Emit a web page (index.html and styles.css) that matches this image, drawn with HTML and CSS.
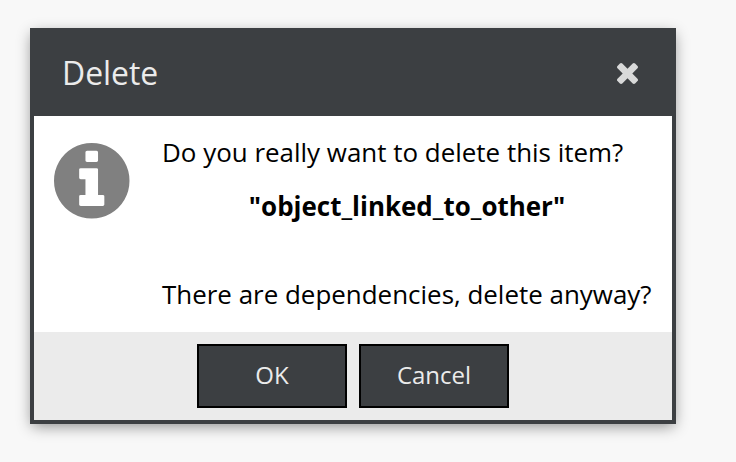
FILE: index.html
```html
<!DOCTYPE html>
<html lang="en">
<head>
<meta charset="utf-8">
<title>Delete</title>
<link rel="stylesheet" href="styles.css">
</head>
<body>
<div class="dialog" role="dialog" aria-labelledby="dialog-title">
  <header class="dialog-header">
    <h1 class="dialog-title" id="dialog-title">Delete</h1>
    <svg class="close-icon" viewBox="110 -18 1188 1188" aria-hidden="true"><path d="M1298 214q0-40-28-68l-136-136q-28-28-68-28t-68 28l-294 294-294-294q-28-28-68-28t-68 28l-136 136q-28 28-28 68t28 68l294 294-294 294q-28 28-28 68t28 68l136 136q28 28 68 28t68-28l294-294 294 294q28 28 68 28t68-28l136-136q28-28 28-68t-28-68l-294-294 294-294q28-28 28-68z"/></svg>
  </header>
  <main class="dialog-body">
    <svg class="info-icon" viewBox="128 128 1536 1536" aria-hidden="true"><path d="M1152 1376v-160q0-14-9-23t-23-9h-96v-512q0-14-9-23t-23-9h-320q-14 0-23 9t-9 23v160q0 14 9 23t23 9h96v320h-96q-14 0-23 9t-9 23v160q0 14 9 23t23 9h448q14 0 23-9t9-23zm-128-896v-160q0-14-9-23t-23-9h-192q-14 0-23 9t-9 23v160q0 14 9 23t23 9h192q14 0 23-9t9-23zm640 416q0 209-103 385.500t-279.500 279.500-385.500 103-385.500-103-279.500-279.500-103-385.500 103-385.500 279.500-279.500 385.500-103 385.500 103 279.500 279.500 103 385.500z"/></svg>
    <div class="message">
      <p class="question">Do you really want to delete this item?</p>
      <p class="item-name">"object_linked_to_other"</p>
      <p class="warning">There are dependencies, delete anyway?</p>
    </div>
  </main>
  <footer class="dialog-footer">
    <button class="button" type="button">OK</button>
    <button class="button" type="button">Cancel</button>
  </footer>
</div>
</body>
</html>
```
FILE: styles.css
```css
* {
  box-sizing: border-box;
}

body {
  margin: 0;
  padding: 28px 30px;
  background: #f8f8f8;
  font-family: "Open Sans", sans-serif;
  color: #000;
}

.dialog {
  width: 646px;
  height: 396px;
  display: flex;
  flex-direction: column;
  border: 4px solid #3c3f42;
  background: #fff;
  box-shadow: 0 4px 14px -2px rgba(0, 0, 0, 0.45);
}

.dialog-header {
  height: 84px;
  display: flex;
  align-items: center;
  justify-content: space-between;
  padding: 0 34px 2px 28px;
  background: #3c3f42;
}

.dialog-title {
  margin: 0;
  font-size: 31.9px;
  font-weight: 400;
  line-height: 44px;
  color: #ebebeb;
}

.close-icon {
  width: 21px;
  height: 21px;
  fill: #d8d9d9;
}

.dialog-body {
  height: 216px;
  display: flex;
  padding: 18px 20px 0;
}

.info-icon {
  width: 75.5px;
  height: 75.5px;
  margin-top: 9px;
  margin-right: 32.5px;
  flex: none;
  fill: #808080;
}

.message {
  width: 490px;
  flex: none;
  font-size: 25.95px;
  line-height: 36px;
  white-space: nowrap;
}

.message p {
  margin: 0;
}

.message .item-name {
  margin: 18px 0 52px;
  font-weight: 700;
  text-align: center;
}

.dialog-footer {
  height: 88px;
  display: flex;
  justify-content: center;
  gap: 12px;
  padding-top: 12px;
  background: #ebebeb;
}

.button {
  width: 150px;
  height: 64px;
  padding: 0 0 2px;
  border: 2px solid #000;
  background: #3c3f42;
  font: 24px/32px "Open Sans", sans-serif;
  color: #ebebeb;
}
```
